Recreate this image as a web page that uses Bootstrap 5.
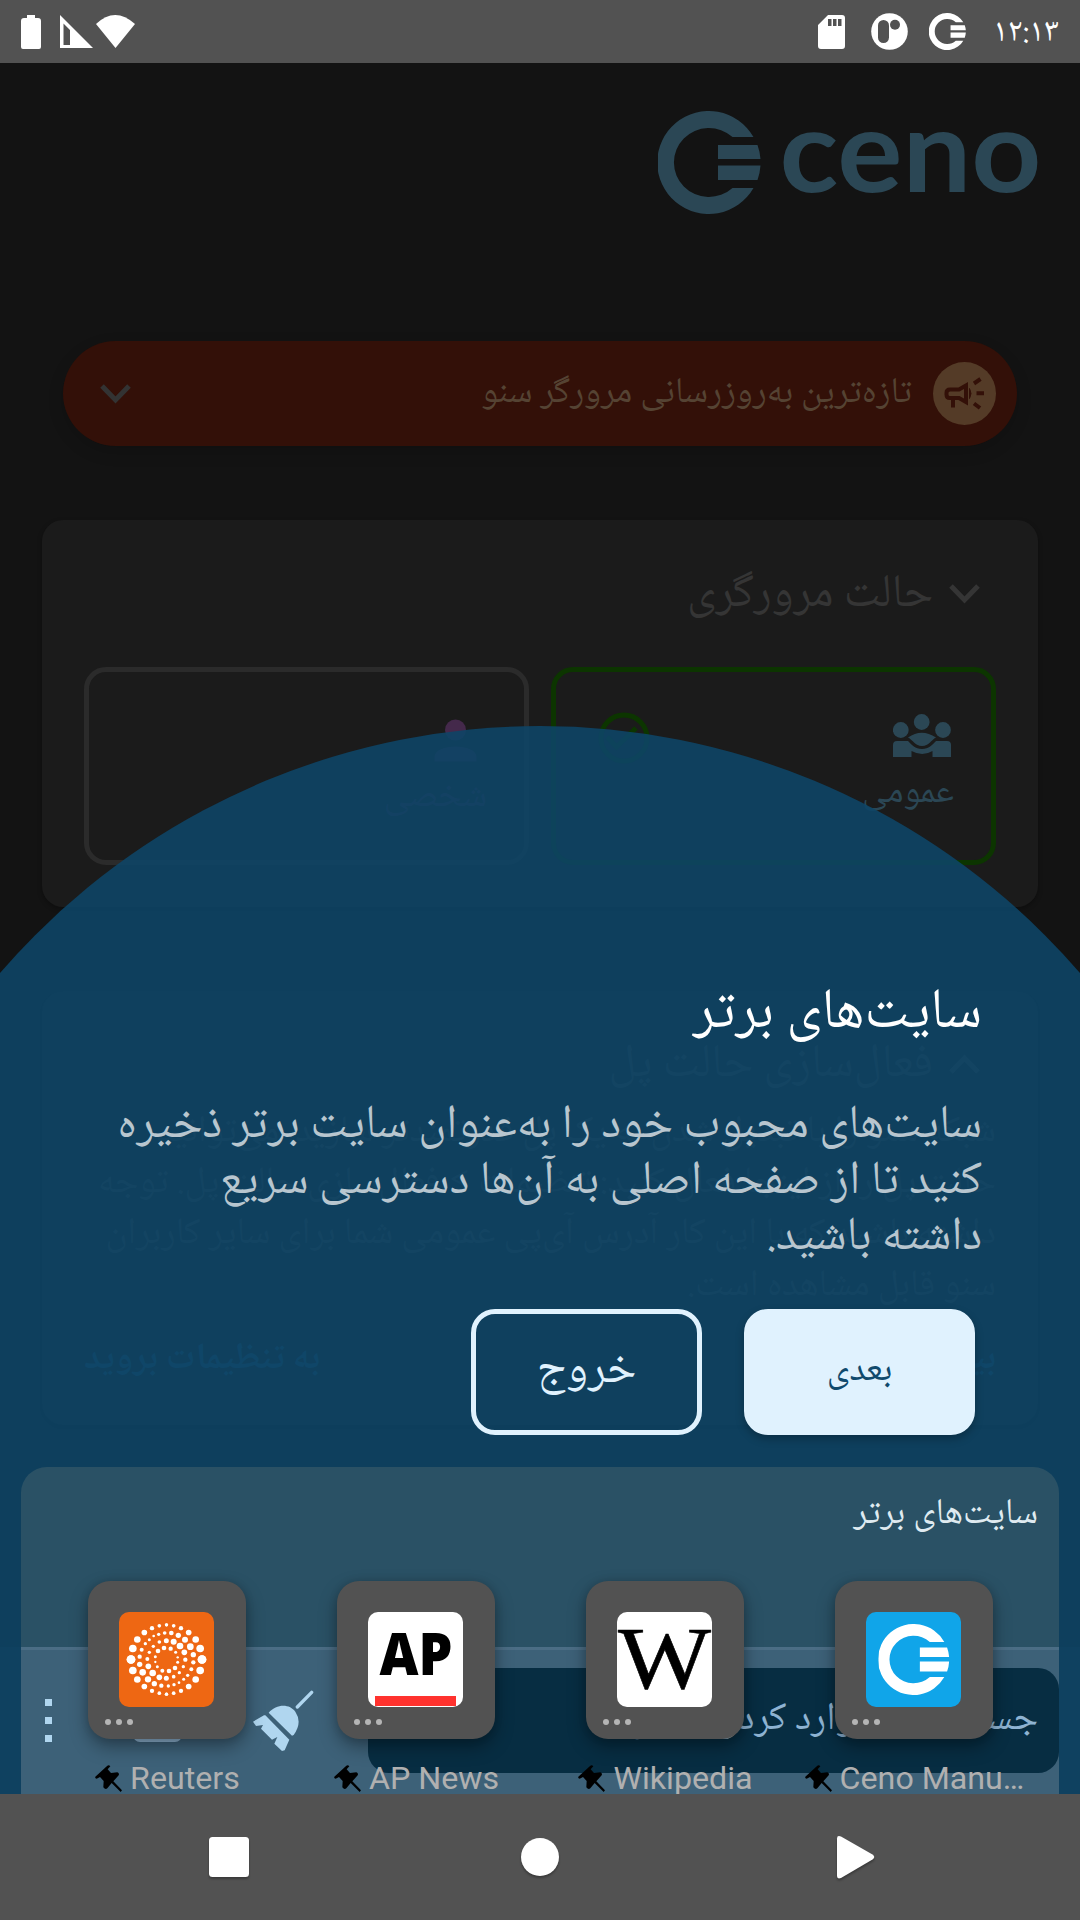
<!DOCTYPE html>
<html lang="fa" dir="rtl">
<head>
<meta charset="utf-8">
<meta name="viewport" content="width=device-width, initial-scale=1">
<title>Ceno</title>
<link href="https://cdn.jsdelivr.net/npm/bootstrap@5.3.0/dist/css/bootstrap.min.css" rel="stylesheet">
<style>
body{margin:0;background:#131313;font-family:"Noto Naskh Arabic","Noto Sans",Roboto,sans-serif}
svg{display:block;flex:none}
.phone{width:1080px;height:1920px;overflow:hidden}
.bar-top{height:63px;background:#525252;color:#fff;padding:0 21px 0 20px}
.clock{font-size:33px;line-height:52px;padding-top:4px}
.stage{height:1731px;background:#131313}
.home{padding:48px 42px 0}
.brand{color:#2b4755;height:104px;margin-bottom:126px}
.notice{height:105px;margin:0 21px 74px;padding:0 21px;gap:21px;border-radius:53px;background:#331008;color:#554333;font-size:36.2px;line-height:60px;box-shadow:0 6px 16px rgba(0,0,0,.15)}
.notice-dot{width:63px;height:63px;background:#543b27;color:#331008}
.tile-card{border-radius:21px;background:#1b1b1b;padding:42px;color:#353535;box-shadow:0 2px 5px rgba(0,0,0,.3)}
.mode-card{height:387px;margin-bottom:84px}
.bridge-card{height:434px;color:#424242}
.card-head{height:63px;font-size:46.5px;line-height:63px}
.card-head span{padding-top:3px}
.bridge-card .card-head{font-size:47.1px}
.mode-row{gap:22px;margin-top:42px}
.mode-box{flex:0 0 445px;height:198px;border:5px solid #2b2b2b;border-radius:22px}
.mode-box.is-on{border-color:#0c3500}
.mode-public{color:#2b4755;font-size:36.4px;padding:41px 37px 0 42px}
.mode-private{color:#44294b;font-size:37px;padding:36px 37px 0 0}
.mode-label{line-height:74px}
.bridge-text{font-size:37.2px;line-height:51.2px;margin:12px 0 0;white-space:nowrap}
.bridge-links{font-size:37px;line-height:52px;margin-top:21px;color:#1d5070}
.dome{width:1428px;height:1428px;left:-174px;top:663px;background:rgba(14,69,103,.885);border-radius:50%}
.tip{left:0;right:0;top:916px;padding:0 98px}
.tip h1{font-size:56.7px;line-height:72px;margin:0 0 48px;color:#fff;font-weight:400}
.tip p{font-size:47.2px;line-height:56px;margin:0 0 42px;color:#b8c6cf;white-space:nowrap}
.tip-actions{gap:42px;padding-right:7px}
.tip-btn{width:231px;height:126px;border:5px solid #e0f2fe;border-radius:24px;color:#e0f2fe;font-size:46.4px;line-height:60px;padding:0}
.tip-btn.fill{background:#e0f2fe;color:#104a6d;font-size:36.8px;box-shadow:0 4px 8px rgba(0,0,0,.25)}
.bottom-scrim{left:0;right:0;top:1584px;bottom:0;background:#0f4160}
.sites-bg{left:21px;right:21px;top:1404px;bottom:0;border-radius:26px 26px 0 0;background:linear-gradient(#2a5165 180px,#4b6d85 180px,#4b6d85 183px,#3d6178 183px)}
.toolbar{left:0;right:21px;top:1605px;height:105px;padding-left:45px;color:#b0d6ef}
.address{width:691px;height:105px;margin-left:54px;border-radius:21px;background:#072d42;color:#8eb3d2;font-size:39px;line-height:70px;padding:0 21px 0}
.menu-dots{gap:11px}
.menu-dots i{display:block;width:7px;height:7px;background:currentColor}
.sites{left:21px;right:21px;top:1404px;bottom:0;color:#dfeaf0}
.sites h2{font-size:36.2px;line-height:60px;font-weight:400;margin:18px 21px 36px;text-align:right}
.sites-row{padding:0 21px}
.site{width:249.2px}
.site-tile{width:158px;height:158px;border-radius:22px;background:#525252;padding:31px 0 0 31px;box-shadow:0 8px 18px rgba(0,0,0,.35),0 0 8px rgba(0,0,0,.12)}
.site-ico{width:95px;height:95px;border-radius:10px;overflow:hidden}
.site-dots{gap:5px;margin:12px 0 0 -14px}
.site-dots i{width:6px;height:6px;border-radius:50%;background:#b5b5b5}
.site-name{font-family:Roboto,sans-serif;font-size:32.2px;line-height:38px;color:#b0b0b0;gap:8px;margin-top:20px;padding-left:2px;white-space:nowrap}
.nav-sys{height:126px;background:#525252}
.nav-sys svg{filter:drop-shadow(0 2px 1px rgba(0,0,0,.3))}
</style>
<script src="https://cdn.jsdelivr.net/npm/bootstrap@5.3.0/dist/js/bootstrap.bundle.min.js"></script>
</head>
<body>
<svg width="0" height="0" class="position-absolute">
  <symbol id="ceno" viewBox="0 0 103 103"><path fill="currentColor" d="M95.500 26A51.500 51.500 0 1 0 95.500 77H74.500A35 34.500 0 1 1 74.500 26zM60 34H99.500A51.500 51.500 0 0 1 102.500 48H60zM60 54.500H102.500A51.500 51.500 0 0 1 99.500 69H60z"/></symbol>
  <symbol id="pin" viewBox="0 0 81 81"><path d="M37 2Q42-1 46 4L38 13L48 24L67 22Q74 25 71 31L55 49L81 76L77 81L50 54L37 70Q31 75 25 67L26 48L15 36L5 41Q-1 41 1 35z"/></symbol>
</svg>
<div class="phone d-flex flex-column">
  <header class="bar-top d-flex justify-content-between align-items-center" dir="ltr">
    <svg width="116" height="36" viewBox="0 0 116 36" fill="#fff"><path d="M7 1h8v3h3q3 0 3 3v26q0 2-2 2H3q-2 0-2-2V7q0-3 3-3h3z"/><path fill-rule="evenodd" d="M40 1L73 34H40zM43.500 9.500V31H50V16z"/><path d="M76 10Q95-8 115 10L95.500 34z"/></svg>
    <div class="d-flex align-items-center">
      <svg width="27" height="34" viewBox="0 0 27 34"><path fill="#fff" fill-rule="evenodd" d="M10 0H24q3 0 3 3V31q0 3-3 3H3q-3 0-3-3V10zM10 4v7h3.500V4zm5 0v7h3.500V4zm5 0v7h3.500V4z"/></svg>
      <svg width="37" height="37" viewBox="0 0 37 37" style="margin-left:26px"><circle cx="18.500" cy="18.500" r="18.300" fill="#fff"/><rect x="7" y="7" width="11" height="23" rx="5.500" fill="#525252"/><circle cx="24" cy="11.700" r="5" fill="#525252"/></svg>
      <svg width="37" height="37" style="margin:0 27px 0 21px"><use href="#ceno"/></svg>
      <span class="clock">۱۲:۱۳</span>
    </div>
  </header>

  <main class="stage position-relative overflow-hidden">
    <div class="home">
      <div class="brand d-flex" dir="ltr">
        <svg class="ms-auto" width="380" height="104" viewBox="0 0 380 104"><use href="#ceno" width="103" height="103"/><text x="121.500" y="80.500" font-family="Lato" font-weight="700" font-size="114" textLength="262" lengthAdjust="spacingAndGlyphs" fill="currentColor">ceno</text></svg>
      </div>
      <div class="notice d-flex align-items-center">
        <span class="notice-dot rounded-circle"><svg width="63" height="63" fill="none" stroke="currentColor" stroke-width="4"><path d="M26 27.500H17q-3.500 0-3.500 3.500v1.500q0 3.500 3.500 3.500h9l7 4V23.500zM20 36v9.500M41 21.500l6.500-4.500M43.500 31.300h7.500M41 41.500l6 4.500"/><path d="M36.500 26.500q3 5 0 10z" fill="currentColor" stroke-width="1"/></svg></span>
        <span class="pt-0">تازه‌ترین به‌روزرسانی مرورگر سنو</span>
        <svg class="me-auto" width="63" height="63" fill="none" stroke="#333" stroke-width="5"><path d="M18 24L31.500 38L45 24"/></svg>
      </div>

      <section class="tile-card mode-card">
        <div class="card-head d-flex align-items-center">
          <svg width="63" height="63" fill="none" stroke="currentColor" stroke-width="5"><path d="M18 24L31.500 38L45 24"/></svg><span>حالت مرورگری</span>
        </div>
        <div class="mode-row d-flex">
          <div class="mode-box is-on mode-public d-flex justify-content-between align-items-start">
            <div>
              <svg width="61" height="44" viewBox="0 0 61 44" fill="currentColor"><circle cx="7.800" cy="17" r="7.900"/><circle cx="28.700" cy="9" r="7.900"/><circle cx="50" cy="17" r="7.900"/><path d="M15 24.500Q28.600 15 43 24.500C38 27 36 33 29 33S20 27 15 24.500zM0 44V32q0-4 4-4h11c4 4 7 8 14 8s10-4 14-8h11q4 0 4 4v12H39.500v-6q-10 6-21 0v6z"/></svg>
              <div class="mode-label">عمومی</div>
            </div>
            <svg width="52" height="52" style="margin-top:-1px" fill="none" stroke="#0c3500" stroke-width="5"><circle cx="26" cy="26" r="23"/><path d="M9 25l9.500 10L38 16"/></svg>
          </div>
          <div class="mode-box mode-private">
            <svg width="63" height="63" fill="currentColor"><circle cx="31.500" cy="22" r="10.500"/><path d="M10.500 53.500V49c0-14 42-14 42 0v4.500z"/></svg>
            <div class="mode-label" style="margin-top:-10px">شخصی</div>
          </div>
        </div>
      </section>

      <section class="tile-card bridge-card">
        <div class="card-head d-flex align-items-center">
          <svg width="63" height="63" fill="none" stroke="currentColor" stroke-width="5"><path d="M18 39L31.500 25L45 39"/></svg><span>فعال‌سازی حالت پل</span>
        </div>
        <p class="bridge-text">شبکه سنو را با تبدیل شدن به یک پل قدرتمندتر سازید. می‌توانید<br>حالت پل را از اینجا فعال کنید: تنظیمات &gt; فعال‌سازی حالت پل. توجه<br>داشته باشید که با این کار آدرس آی‌پی عمومی شما برای سایر کاربران<br>سنو قابل مشاهده است.</p>
        <div class="bridge-links d-flex justify-content-between fw-bold"><span>بیشتر بدانید</span><span>به تنظیمات بروید</span></div>
      </section>
    </div>

    <div class="dome position-absolute"></div>

    <section class="tip position-absolute">
      <h1>سایت‌های برتر</h1>
      <p>سایت‌های محبوب خود را به‌عنوان سایت برتر ذخیره<br>کنید تا از صفحه اصلی به آن‌ها دسترسی سریع<br>داشته باشید.</p>
      <div class="tip-actions d-flex">
        <button class="btn tip-btn fill">بعدی</button>
        <button class="btn tip-btn">خروج</button>
      </div>
    </section>

    <div class="bottom-scrim position-absolute"></div>
    <div class="sites-bg position-absolute"></div>
    <div class="toolbar position-absolute d-flex align-items-center" dir="ltr">
      <div class="menu-dots d-flex flex-column"><i></i><i></i><i></i></div>
      <svg width="49" height="49" style="margin:0 70px 0 81px" fill="none" stroke="#8eb3d2" stroke-width="4"><rect x="2" y="-1" width="45" height="45" rx="5"/></svg>
      <svg width="62" height="62" viewBox="516 360 186 186" fill="currentColor"><path d="M652 411L695 367" stroke="currentColor" stroke-width="10" stroke-linecap="round"/><path d="M566 428C590 400 630 401 646 425Q668 458 641 495L636 497zM556 436L628 509L614 541L606 543L583 521L592 501L576 509L543 476L549 465L528 468L519 455L552 436z"/></svg>
      <div class="address d-flex align-items-center" dir="rtl">جست‌وجو یا وارد کردن آدرس</div>
    </div>

    <section class="sites position-absolute" dir="ltr">
      <h2 dir="rtl">سایت‌های برتر</h2>
      <div class="sites-row d-flex">
        <div class="site d-flex flex-column align-items-center">
          <div class="site-tile"><div class="site-ico" style="background:#ee6713"><svg id="reuters" width="95" height="95" viewBox="117 126 285 285" fill="#fff"></svg></div><div class="site-dots d-flex"><i></i><i></i><i></i></div></div>
          <div class="site-name d-flex align-items-center"><svg width="27" height="27"><use href="#pin"/></svg>Reuters</div>
        </div>
        <div class="site d-flex flex-column align-items-center">
          <div class="site-tile"><div class="site-ico bg-white"><svg width="95" height="95"><text x="11.500" y="63" font-family="Open Sans" font-weight="800" font-size="57.500" textLength="73" lengthAdjust="spacingAndGlyphs">AP</text><path fill="#ff322e" d="M7 84h81v10H7z"/></svg></div><div class="site-dots d-flex"><i></i><i></i><i></i></div></div>
          <div class="site-name d-flex align-items-center"><svg width="27" height="27"><use href="#pin"/></svg>AP News</div>
        </div>
        <div class="site d-flex flex-column align-items-center">
          <div class="site-tile"><div class="site-ico bg-white"><svg width="95" height="95"><text x="1" y="75.500" font-family="Liberation Serif" font-size="88" textLength="93" lengthAdjust="spacingAndGlyphs" stroke="#000" stroke-width=".6">W</text></svg></div><div class="site-dots d-flex"><i></i><i></i><i></i></div></div>
          <div class="site-name d-flex align-items-center"><svg width="27" height="27"><use href="#pin"/></svg>Wikipedia</div>
        </div>
        <div class="site d-flex flex-column align-items-center">
          <div class="site-tile"><div class="site-ico" style="background:#10a5e9;color:#fff"><svg width="95" height="95"><use href="#ceno" x="12.500" y="12" width="71" height="71"/></svg></div><div class="site-dots d-flex"><i></i><i></i><i></i></div></div>
          <div class="site-name d-flex align-items-center"><svg width="27" height="27"><use href="#pin"/></svg>Ceno Manu…</div>
        </div>
      </div>
    </section>
  </main>

  <nav class="nav-sys d-flex align-items-center" dir="ltr">
    <svg width="1080" height="60" fill="#fff"><rect x="209" y="10" width="40" height="40" rx="3.500"/><circle cx="540" cy="30" r="19"/><path d="M837 11.500Q837 8 841 9.500L872.500 27.500Q876 30 872.500 32.500L841 51Q837 52.500 837 49z"/></svg>
  </nav>
</div>
<script>
// Dot rings of the Reuters mark: [x, y, radius]
const dots=[[274,189,7],[295,196,8],[315,209,9],[331,230,10],[340,254,8],[340,277,6.5],[334,298,6],[323,316,5],[311,328,4.5],[297,338,4],[282,344,5],[265,348,5],[244,347,6.5],[223,341,8],[204,328,9.5],[188,307,10],[179,283,8],[179,260,6.5],[185,239,6],[196,221,5],[208,209,4.5],[221,198,4],[236,193,5],[254,189,5.5],
[259,212,7.5],[281,215,9],[300,228,10],[313,247,8.5],[316,269,6.5],[310,290,5],[298,308,5],[281,320,5.5],[259,325,7.5],[238,322,8.5],[218,309,10],[205,289,8.5],[202,267,6],[208,247,5],[220,229,5],[238,216,5.5],
[272,236,6.5],[287,247,4.5],[293,262,3.5],[293,277,4.5],[285,294,7],[267,303,7],[247,302,6],[232,290,4.5],[226,276,3.5],[226,260,4.5],[234,243,7],[252,234,7]];
for(const [x,y,r] of [[0,-104,5],[21.5,-101,5.5],[43.5,-94,6.5],[66.5,-81,8.5],[87.5,-60,10],[101,-33,11.5],[106.5,0,13]])
  for(const sx of [1,-1])for(const sy of [1,-1])dots.push([259.5+sx*x,268.5+sy*y,r]);
document.getElementById('reuters').innerHTML=dots.map(([x,y,r])=>`<circle cx="${x}" cy="${y}" r="${r}"/>`).join('');
</script>
</body>
</html>
